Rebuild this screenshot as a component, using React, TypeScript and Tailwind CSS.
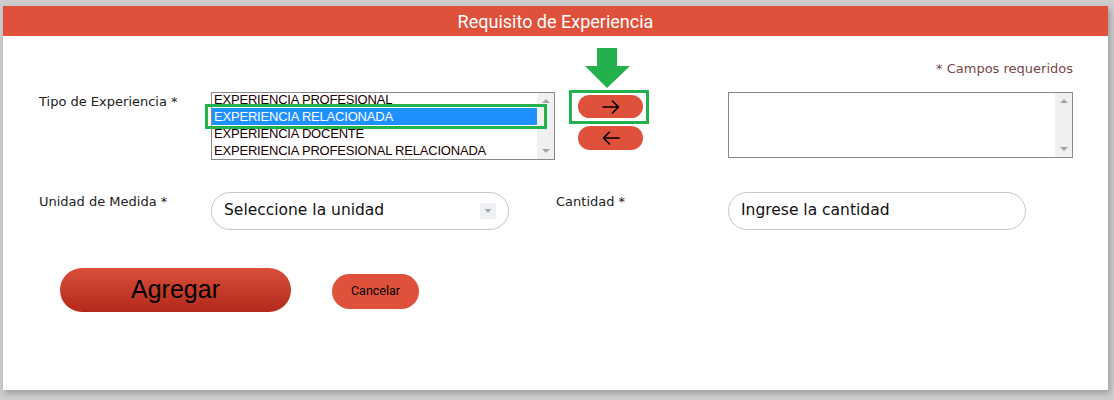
const tipos = [
  'EXPERIENCIA PROFESIONAL',
  'EXPERIENCIA RELACIONADA',
  'EXPERIENCIA DOCENTE',
  'EXPERIENCIA PROFESIONAL RELACIONADA',
];

function Scrollbar() {
  return (
    <div className="w-[17px] h-full bg-[#f0f0f0] flex flex-col items-center justify-between py-[6px]">
      <div className="w-0 h-0 border-l-[4px] border-r-[4px] border-b-[4px] border-l-transparent border-r-transparent border-b-[#a3a3a3]" />
      <div className="w-0 h-0 border-l-[4px] border-r-[4px] border-t-[4px] border-l-transparent border-r-transparent border-t-[#a3a3a3]" />
    </div>
  );
}

function Flecha({ left }: { left?: boolean }) {
  return (
    <svg width="18" height="14" viewBox="0 0 18 14" className={left ? 'rotate-180' : ''}>
      <path d="M1 7h15.5M10.5 1l6 6-6 6" fill="none" stroke="#000" strokeWidth={1.6} strokeLinecap="round" strokeLinejoin="round" />
    </svg>
  );
}

export default function App() {
  const label = "text-[13px] text-[#222] font-['DejaVu_Sans',Verdana,sans-serif]";

  return (
    <div className="w-[1114px] h-[400px] bg-[#cdcdcd] pt-[6px] pl-[3px] overflow-hidden">
      <div className="w-[1105px] h-[384px] bg-white shadow-[2px_3px_6px_rgba(0,0,0,0.25)] relative">
        <div className="h-[30px] bg-[#df513b] flex items-center justify-center text-white text-[18px] font-['Roboto',sans-serif]">
          Requisito de Experiencia
        </div>

        <div className="pl-[36px] pr-[35px]">
          <div className={`${label} text-right !text-[#7a4545] mt-[25px] h-[16px] leading-[16px]`}>* Campos requeridos</div>

          {/* fila 1 */}
          <div className="flex items-start mt-[15px]">
            <div className={`${label} w-[172px]`}>Tipo de Experiencia *</div>

            <div className="w-[344px] h-[68px] border border-[#8a8a8a] flex overflow-hidden relative">
              <div className="flex-1 -mt-[2px] font-['Liberation_Sans',Arial,sans-serif] text-[13px] tracking-[-0.2px] text-[#1a0000]">
                {tipos.map((t, i) => (
                  <div
                    key={t}
                    className={`h-[17px] leading-[17px] px-[2px] ${i === 1 ? 'bg-[#1e90ff] text-white' : ''}`}
                  >
                    {t}
                  </div>
                ))}
              </div>
              <Scrollbar />
            </div>

            <div className="ml-[23px] mt-[3px] w-[65px] flex flex-col gap-[8px]">
              <button className="h-[23px] rounded-full bg-[#df513b] flex items-center justify-center">
                <Flecha />
              </button>
              <button className="h-[24px] rounded-full bg-[#df513b] flex items-center justify-center">
                <Flecha left />
              </button>
            </div>

            <div className="ml-[85px] w-[345px] h-[66px] border border-[#8a8a8a] flex justify-end">
              <Scrollbar />
            </div>
          </div>

          {/* fila 2 */}
          <div className="flex items-start mt-[32px]">
            <div className={`${label} w-[172px]`}>Unidad de Medida *</div>
            <div className="w-[298px] h-[38px] rounded-full border border-[#c3c7d0] flex items-center justify-between pl-[12px] pr-[12px] font-['DejaVu_Sans',Verdana,sans-serif] text-[15.5px] text-[#111]">
              <span>Seleccione la unidad</span>
              <div className="w-[16px] h-[16px] bg-[#eef0f4] flex items-center justify-center">
                <div className="w-0 h-0 border-l-[3px] border-r-[3px] border-t-[4px] border-l-transparent border-r-transparent border-t-[#9aa5b8]" />
              </div>
            </div>
            <div className={`${label} w-[172px] ml-[47px]`}>Cantidad *</div>
            <div className="w-[298px] h-[38px] rounded-full border border-[#c3c7d0] flex items-center pl-[12px] font-['DejaVu_Sans',Verdana,sans-serif] text-[15.5px] text-[#111]">
              Ingrese la cantidad
            </div>
          </div>

          {/* fila 3 */}
          <div className="flex items-start mt-[38px] pl-[21px]">
            <button className="w-[231px] h-[44px] rounded-full bg-gradient-to-b from-[#da4f3b] to-[#b3281a] text-black text-[25px] font-['Liberation_Sans',Arial,sans-serif]">
              Agregar
            </button>
            <button className="ml-[41px] mt-[6px] w-[87px] h-[35px] rounded-full bg-[#df513b] text-black text-[12.5px] font-['Roboto',sans-serif]">
              Cancelar
            </button>
          </div>
        </div>

        {/* anotaciones */}
        <div className="absolute left-[202px] top-[98px] w-[342px] h-[25px] border-[3px] border-[#22b14c]" />
        <div className="absolute left-[566px] top-[84px] w-[80px] h-[34px] border-[3px] border-[#22b14c]" />
        <svg className="absolute left-[582px] top-[42px]" width="46" height="40" viewBox="0 0 46 40">
          <path d="M12 0h20v18h13L22 40 0 18h12z" fill="#22b14c" />
        </svg>
      </div>
    </div>
  );
}
